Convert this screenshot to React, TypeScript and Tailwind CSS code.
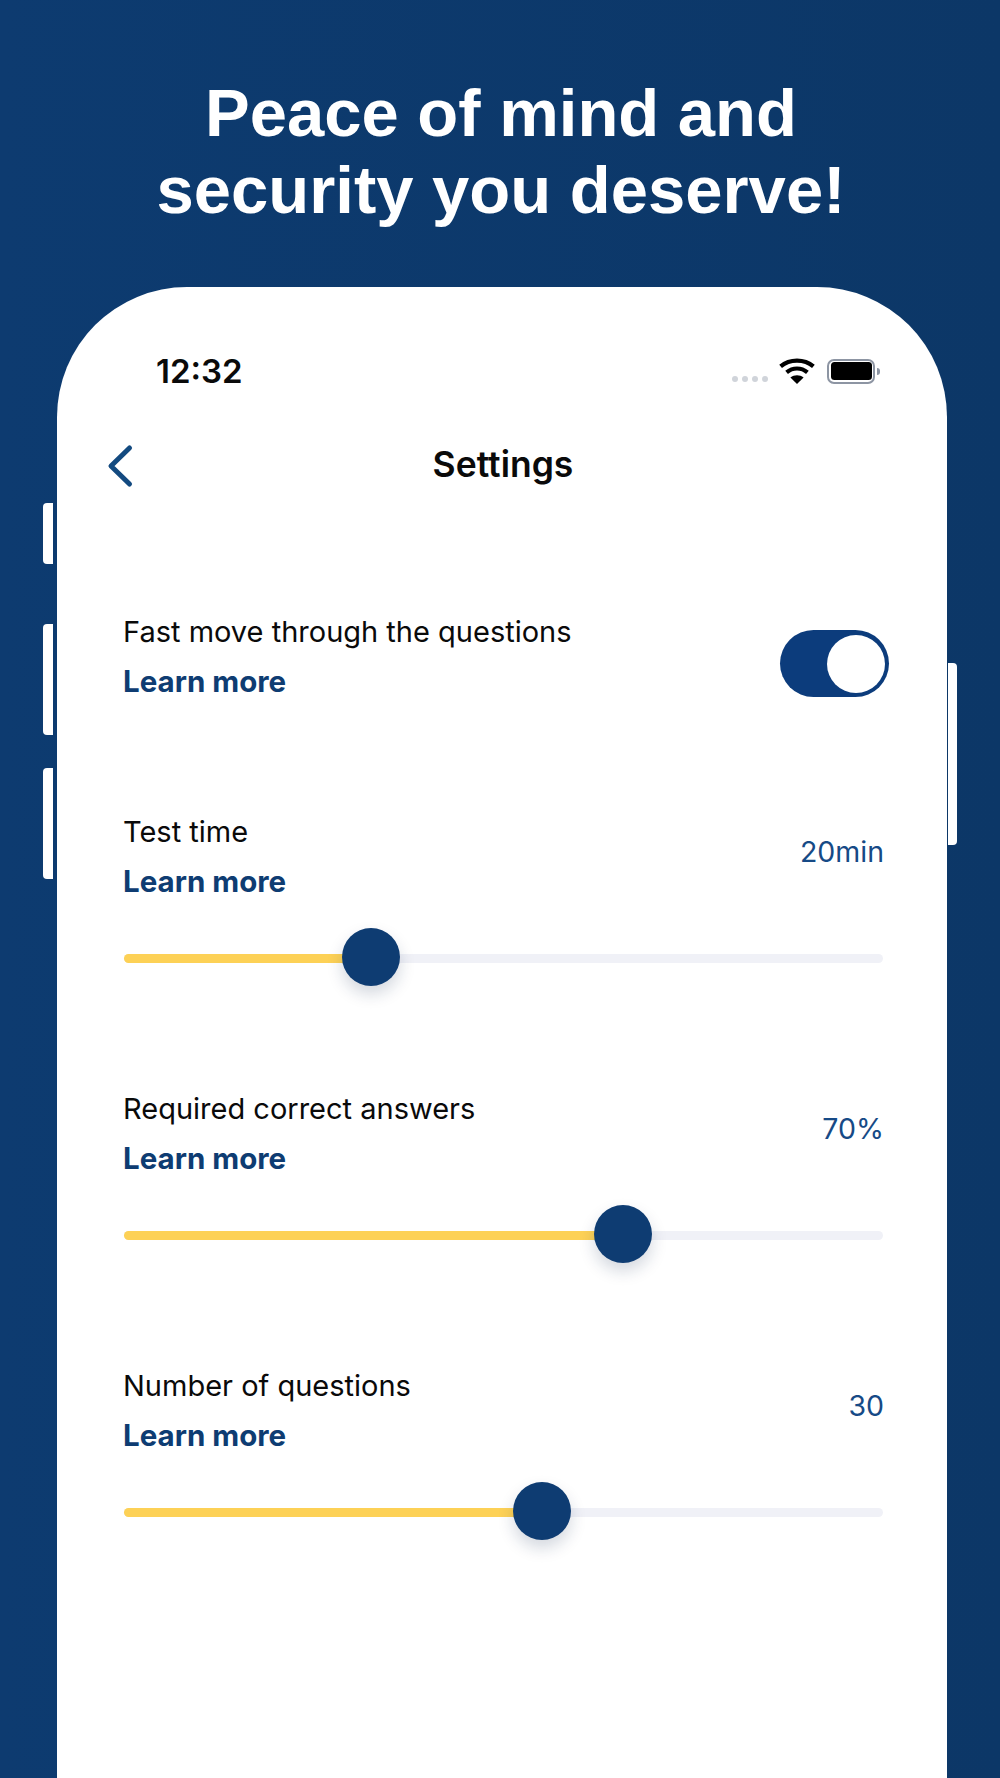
import React from 'react';

const rows = [
  { label: 'Test time', value: '20min', percent: 32.5 },
  { label: 'Required correct answers', value: '70%', percent: 65.7 },
  { label: 'Number of questions', value: '30', percent: 55.1 },
];

function Slider({ percent }: { percent: number }) {
  return (
    <div className="relative ml-[1px] mt-[56px] h-[9px] rounded-full bg-[#f0f1f7]">
      <div className="h-full rounded-full bg-[#fdd156]" style={{ width: `${percent}%` }} />
      <div
        className="absolute top-[calc(50%-2px)] h-[58px] w-[58px] -translate-x-1/2 -translate-y-1/2 rounded-full bg-[#0e3c72] shadow-[0_8px_16px_rgba(14,40,80,0.18)]"
        style={{ left: `${percent}%` }}
      />
    </div>
  );
}

function Wifi() {
  return (
    <svg width="36" height="26" viewBox="0 0 36 26" fill="none" stroke="#000" strokeWidth="4.2">
      <path d="M1.6 8.4C10.8 .6 25.2 .6 34.4 8.4" />
      <path d="M7.6 14.4C13.8 9.2 22.2 9.2 28.4 14.4" />
      <path d="M18 26l-6.6-6.4c3.9-3 9.3-3 13.2 0z" fill="#000" stroke="none" />
    </svg>
  );
}

export default function App() {
  return (
    <div className="h-[1778px] w-[1000px] overflow-hidden bg-gradient-to-r from-[#0d3b70] to-[#0c3767] font-['Inter',sans-serif]">
      <h1 className="pl-[2px] pt-[74px] text-center font-['Liberation_Sans',sans-serif] text-[67px] font-bold leading-[77px] text-white">
        Peace of mind and
        <br />
        security you deserve!
      </h1>

      <div className="relative ml-[57px] mt-[59px] h-[1500px] w-[890px] rounded-t-[130px] bg-white">
        {/* side buttons */}
        <div className="absolute left-[-14px] top-[216px] h-[61px] w-[10px] rounded-l-[4px] bg-white" />
        <div className="absolute left-[-14px] top-[337px] h-[111px] w-[10px] rounded-l-[4px] bg-white" />
        <div className="absolute left-[-14px] top-[481px] h-[111px] w-[10px] rounded-l-[4px] bg-white" />
        <div className="absolute right-[-10px] top-[376px] h-[182px] w-[9px] rounded-r-[4px] bg-white" />

        {/* status bar */}
        <div className="flex items-center justify-between pl-[99px] pr-[67px] pt-[64px]">
          <span className="text-[33px] font-semibold leading-[40px] text-[#0a0a0a]">12:32</span>
          <div className="flex items-center">
            <div className="mr-[11px] mt-[16px] flex gap-[3.5px]">
              <span className="h-[6.5px] w-[6.5px] rounded-full bg-[#d0d4da]" />
              <span className="h-[6.5px] w-[6.5px] rounded-full bg-[#d0d4da]" />
              <span className="h-[6.5px] w-[6.5px] rounded-full bg-[#d0d4da]" />
              <span className="h-[6.5px] w-[6.5px] rounded-full bg-[#d0d4da]" />
            </div>
            <Wifi />
            <div className="ml-[12px] flex h-[25px] w-[48px] items-center justify-center rounded-[7px] border-[2px] border-[#8d95a3]">
              <div className="h-[18px] w-[41px] rounded-[3.5px] bg-black" />
            </div>
            <div className="ml-[2px] h-[7px] w-[3px] rounded-r-full bg-[#8d95a3]" />
          </div>
        </div>

        {/* nav bar */}
        <div className="relative mt-[55px] text-center">
          <svg
            className="absolute left-[50px] top-[-2px]"
            width="28"
            height="44"
            viewBox="0 0 28 44"
            fill="none"
            stroke="#134a80"
            strokeWidth="5"
            strokeLinecap="round"
            strokeLinejoin="round"
          >
            <path d="M22.5 4L4 22l18.5 18" />
          </svg>
          <span className="relative left-[1px] top-[-1px] text-[35.5px] font-semibold leading-[40px] text-[#0a0a0a]">Settings</span>
        </div>

        <div className="pl-[66px] pr-[64px]">
          <div className="mt-[128px] flex items-start justify-between">
            <div>
              <div className="text-[29px] leading-[36px] text-[#0a0a0a]">Fast move through the questions</div>
              <div className="mt-[13px] text-[29.5px] font-bold leading-[36px] text-[#0e3c72]">Learn more</div>
            </div>
            <div className="mr-[-6px] mt-[16px] flex h-[67px] w-[109px] items-center justify-end rounded-full bg-[#0c3c7c] pr-[4px]">
              <div className="h-[58px] w-[58px] rounded-full bg-white" />
            </div>
          </div>

          <div className="mt-[115px] flex flex-col gap-[128px]">
            {rows.map((row) => (
              <div key={row.label}>
                <div className="flex items-center justify-between">
                  <div>
                    <div className="text-[29px] leading-[36px] text-[#0a0a0a]">{row.label}</div>
                    <div className="mt-[13px] text-[29.5px] font-bold leading-[36px] text-[#0e3c72]">Learn more</div>
                  </div>
                  <span className="mb-[10px] mr-[-1px] text-[28.5px] leading-[36px] text-[#164a86]">{row.value}</span>
                </div>
                <div className="-mt-[1px]">
                  <Slider percent={row.percent} />
                </div>
              </div>
            ))}
          </div>
        </div>
      </div>
    </div>
  );
}
